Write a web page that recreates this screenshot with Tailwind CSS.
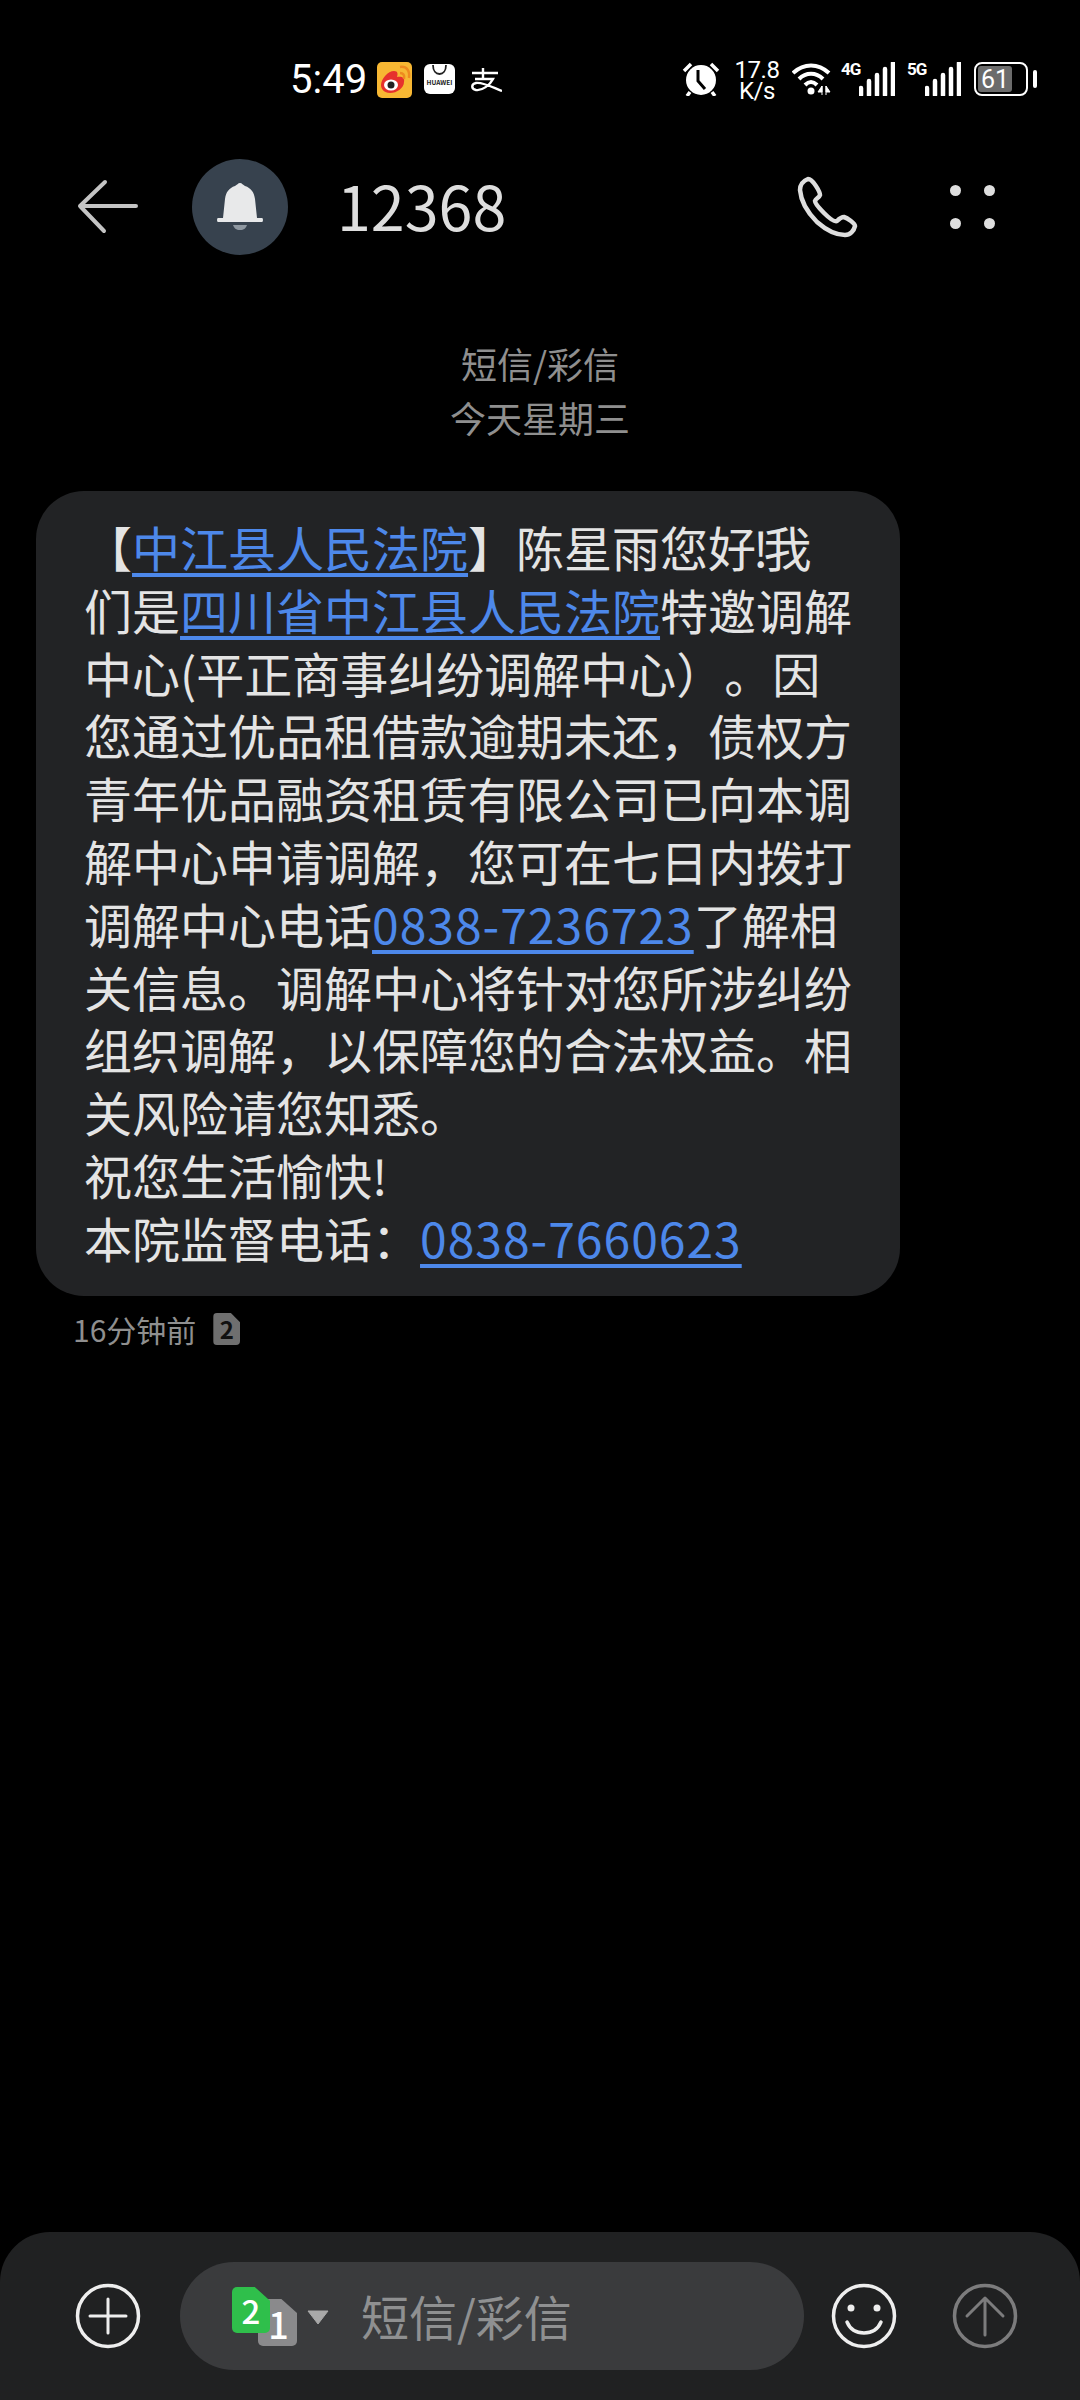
<!DOCTYPE html>
<html lang="zh-CN">
<head>
	<meta charset="UTF-8">
	<meta name="viewport" content="width=device-width, initial-scale=1.0">
	<title>12368</title>
	<script src="https://cdn.jsdelivr.net/npm/@tailwindcss/browser@4"></script>
</head>
<body class="bg-black">
	<div class="w-[1080px] h-[2400px] bg-black flex flex-col font-['Noto_Sans_CJK_SC','Noto_Sans',sans-serif] text-[#e3e3e3] overflow-hidden">

		<!-- status bar -->
		<div class="h-[148px] flex items-start pt-[60px] pl-[290px] pr-[43px] text-white">
			<span class="text-[40px] leading-[40px] w-[87px] font-['Roboto',sans-serif]">5:49</span>
			<svg class="w-[35px] h-[36px] mt-[2px]" viewBox="0 0 35 36">
				<rect width="35" height="36" rx="5" fill="#f7b733"/>
				<path d="M4 23c0-6 7-14 13-14 4 0 4 3 3 6 5-1 8 1 7 5 0 6-7 11-14 11-6 0-9-4-9-8z" fill="#e6312d"/>
				<ellipse cx="14" cy="23" rx="7" ry="5.500" fill="#fff"/>
				<circle cx="14" cy="23" r="3.500" fill="#222"/>
				<path d="M23 11c3 0 5 2 4 6M23 5c7-1 10 4 9 11" fill="none" stroke="#ee8a1f" stroke-width="2.500"/>
			</svg>
			<svg class="w-[31px] h-[30px] mt-[4px] ml-[12px]" viewBox="0 0 31 30">
				<rect width="31" height="30" rx="6" fill="#fff"/>
				<path d="M9 1c0 6 3 9 6.500 9S22 7 22 1" fill="none" stroke="#222" stroke-width="1.800"/>
				<text x="15.500" y="21" text-anchor="middle" font-size="6.500" font-weight="700" fill="#222">HUAWEI</text>
			</svg>
			<svg class="w-[32px] h-[24px] mt-[8px] ml-[15px]" viewBox="0 0 32 24">
				<path d="M13 0v11M2 5h26M5 11H23C20 17 12 23 6 22 1 21 1 16 6 15 13 14 24 20 32 23" fill="none" stroke="#fff" stroke-width="2.400"/>
			</svg>

			<div class="ml-auto flex items-start">
				<svg class="w-[38px] h-[34px] mt-[2px] ml-[1px]" viewBox="0 0 38 34">
					<circle cx="19" cy="18" r="15" fill="#fff"/>
					<path d="M16 8v11l7 8" fill="none" stroke="#000" stroke-width="3"/>
					<path d="M2 9l7-7M36 9l-7-7M8 30l-3 4M30 30l3 4" stroke="#fff" stroke-width="3.500" fill="none"/>
				</svg>
				<div class="w-[44px] ml-[15px] flex flex-col items-center text-[24px] leading-[21px] tracking-[-0.5px] font-['Roboto',sans-serif]">
					<span>17.8</span>
					<span>K/s</span>
				</div>
				<svg class="w-[40px] h-[34px] ml-[13px] mt-[2px]" viewBox="0 0 40 34">
					<path d="M1 11c11-10 25-10 36 0M7 17c7-7 17-7 24 0M13 23c4-4 8-4 12 0" fill="none" stroke="#fff" stroke-width="4"/>
					<circle cx="19" cy="29" r="3.500" fill="#fff"/>
					<path d="M30 24l-4 6h4zM34 24l4 6h-4zM30 24v9M34 24v9" fill="#fff" stroke="#fff" stroke-width="1"/>
				</svg>
				<span class="w-[18px] ml-[9px] mt-[1px] text-[17px] leading-[17px] tracking-[-1px] font-bold font-['Roboto',sans-serif]">4G</span>
				<svg class="w-[36px] h-[34px] mt-[2px]" viewBox="0 0 36 34">
					<path d="M3 26v7M11 19v14M19 13v20M27 7v26M35 1v32" stroke="#fff" stroke-width="4.500" stroke-linecap="round" fill="none" transform="translate(-1 0)"/>
				</svg>
				<span class="w-[18px] ml-[12px] mt-[1px] text-[17px] leading-[17px] tracking-[-1px] font-bold font-['Roboto',sans-serif]">5G</span>
				<svg class="w-[36px] h-[34px] mt-[2px]" viewBox="0 0 36 34">
					<path d="M3 26v7M11 19v14M19 13v20M27 7v26M35 1v32" stroke="#fff" stroke-width="4.500" stroke-linecap="round" fill="none" transform="translate(-1 0)"/>
				</svg>
				<div class="w-[54px] h-[34px] ml-[13px] mt-[2px] border-[2.500px] border-white rounded-[8px] p-[2px] flex">
					<div class="w-[34px] bg-[#6b6b6b] rounded-[3px] flex items-center justify-center text-[25px] leading-none font-['Roboto',sans-serif]">61</div>
				</div>
				<div class="w-[4px] h-[18px] ml-[5px] mt-[10px] bg-white rounded-full"></div>
			</div>
		</div>

		<!-- header -->
		<div class="h-[118px] flex items-center">
			<svg class="w-[62px] h-[56px] ml-[77px]" viewBox="0 0 62 56">
				<path d="M59 27H3M28 3L3 27l24 25" fill="none" stroke="#c4c4c4" stroke-width="4" stroke-linecap="round" stroke-linejoin="round"/>
			</svg>
			<div class="w-[96px] h-[96px] ml-[53px] rounded-full bg-[#37424e] flex items-center justify-center">
				<svg class="w-[46px] h-[48px]" viewBox="0 0 46 48">
					<path d="M23 0c2 0 3 2 5 3 6 2 9 6 10 13l2 19h5q1 0 1 2t-1 2H1q-1 0-1-2t1-2h5l2-19C9 9 12 5 18 3c2-1 3-3 5-3z" fill="#e8e9ea"/>
					<path d="M16 42h14c-1 3-3 5-7 5s-6-2-7-5z" fill="#8f98a1"/>
				</svg>
			</div>
			<span class="ml-[49px] mb-[5px] text-[61px] leading-none text-[#dedede]">12368</span>
			<svg class="w-[62px] h-[62px] ml-auto" viewBox="0 0 62 62">
				<path d="M11 3c-5 2-8 6-8 11 1 12 9 24 17 32 8 7 18 13 28 13 5 0 9-4 10-9 0-3-8-8-11-9-3 0-5 2-7 4-2 1-5 0-13-8-6-6-9-10-9-12 1-3 4-3 5-6 0-3-7-16-12-16z" fill="none" stroke="#dedede" stroke-width="4.500" stroke-linejoin="round"/>
			</svg>
			<div class="ml-[91px] mr-[85px] grid grid-cols-2 gap-x-[23px] gap-y-[22px]">
				<div class="w-[11px] h-[11px] rounded-full bg-[#dedede]"></div>
				<div class="w-[11px] h-[11px] rounded-full bg-[#dedede]"></div>
				<div class="w-[11px] h-[11px] rounded-full bg-[#dedede]"></div>
				<div class="w-[11px] h-[11px] rounded-full bg-[#dedede]"></div>
			</div>
		</div>

		<!-- date -->
		<div class="mt-[70px] text-center text-[36px] leading-[54px] text-[#8f8f8f]">
			<p>短信/彩信</p>
			<p>今天星期三</p>
		</div>

		<!-- message -->
		<div class="mt-[47px] ml-[36px] w-[864px] h-[805px] rounded-[48px] bg-[#222325] pl-[49px] pt-[24px] text-[48px] leading-[62.800px] text-[#e4e4e4] [text-spacing-trim:space-all]">
			<p class="whitespace-nowrap -ml-[1px]">【<a class="text-[#4d88ea] underline underline-offset-[6px]">中江县人民法院</a>】陈星雨您好<span class="-ml-[3px] tracking-[-5px]">!</span>我</p>
			<p class="whitespace-nowrap -ml-[1px]">们是<a class="text-[#4d88ea] underline underline-offset-[6px]">四川省中江县人民法院</a>特邀调解</p>
			<p class="whitespace-nowrap -ml-[1px]">中心(平正商事纠纷调解中心）。因</p>
			<p class="whitespace-nowrap -ml-[1px]">您通过优品租借款逾期未还，债权方</p>
			<p class="whitespace-nowrap -ml-[1px]">青年优品融资租赁有限公司已向本调</p>
			<p class="whitespace-nowrap -ml-[1px]">解中心申请调解，您可在七日内拨打</p>
			<p class="whitespace-nowrap -ml-[1px]">调解中心电话<a class="text-[#4d88ea] underline underline-offset-[6px] tracking-[1px]">0838-7236723</a>了解相</p>
			<p class="whitespace-nowrap -ml-[1px]">关信息。调解中心将针对您所涉纠纷</p>
			<p class="whitespace-nowrap -ml-[1px]">组织调解，以保障您的合法权益。相</p>
			<p class="whitespace-nowrap -ml-[1px]">关风险请您知悉。</p>
			<p class="whitespace-nowrap -ml-[1px]">祝您生活愉快!</p>
			<p class="whitespace-nowrap -ml-[1px]">本院监督电话：<a class="text-[#4d88ea] underline underline-offset-[6px] tracking-[1px]">0838-7660623</a></p>
		</div>

		<!-- time -->
		<div class="mt-[15px] ml-[73px] flex items-center text-[30px] leading-[36px] text-[#8f8f8f]">
			<span>16分钟前</span>
			<span class="ml-[17px] w-[27px] h-[32px] bg-[#6f6f6f] rounded-[4px] [clip-path:polygon(0_0,65%_0,100%_30%,100%_100%,0_100%)] flex items-center justify-center text-[24px] leading-none font-bold text-[#111]">2</span>
		</div>

		<!-- input bar -->
		<div class="mt-auto h-[168px] bg-[#202122] rounded-t-[50px] flex items-start pt-[30px]">
			<svg class="w-[66px] h-[66px] ml-[75px] mt-[21px]" viewBox="0 0 66 66">
				<circle cx="33" cy="33" r="30.500" fill="none" stroke="#eee" stroke-width="3.500"/>
				<path d="M33 16v34M15 33h36" stroke="#eee" stroke-width="3" stroke-linecap="round"/>
			</svg>
			<div class="relative ml-[39px] w-[624px] h-[108px] rounded-[54px] bg-[#3a3b3d] flex items-center">
				<!-- sim badges -->
				<div class="absolute left-[78px] top-[37px] w-[39px] h-[47px] bg-[#8a8a8c] rounded-[5px] [clip-path:polygon(0_0,60%_0,100%_30%,100%_100%,0_100%)] flex items-center justify-center pl-[2px] text-[36px] leading-none font-medium text-white">1</div>
				<div class="absolute left-[52px] top-[25px] w-[38px] h-[46px] bg-[#2fbf4b] rounded-[5px] [clip-path:polygon(0_0,60%_0,100%_30%,100%_100%,0_100%)] flex items-center justify-center text-[33px] leading-none font-medium text-white">2</div>
				<svg class="absolute left-[127px] top-[48px] w-[22px] h-[15px]" viewBox="0 0 22 15">
					<path d="M1 1h20L11 14z" fill="#a9a9a9" stroke="#a9a9a9" stroke-linejoin="round"/>
				</svg>
				<span class="ml-[181px] mb-[2px] text-[48px] leading-none text-[#8f9091]">短信/彩信</span>
			</div>
			<svg class="w-[66px] h-[66px] ml-[27px] mt-[21px]" viewBox="0 0 66 66">
				<circle cx="33" cy="33" r="30.500" fill="none" stroke="#eee" stroke-width="3.500"/>
				<circle cx="20" cy="25" r="3.500" fill="#eee"/>
				<circle cx="46" cy="25" r="3.500" fill="#eee"/>
				<path d="M16 39c3 7 9 11 17 11s14-4 17-11" fill="none" stroke="#eee" stroke-width="3.500" stroke-linecap="round"/>
			</svg>
			<svg class="w-[66px] h-[66px] ml-[55px] mt-[21px]" viewBox="0 0 66 66">
				<circle cx="33" cy="33" r="30.500" fill="none" stroke="#7c7c7d" stroke-width="3.500"/>
				<path d="M33 52V15M15 33l18-18 18 18" fill="none" stroke="#7c7c7d" stroke-width="3" stroke-linecap="round" stroke-linejoin="round"/>
			</svg>
		</div>
	</div>
</body>
</html>
